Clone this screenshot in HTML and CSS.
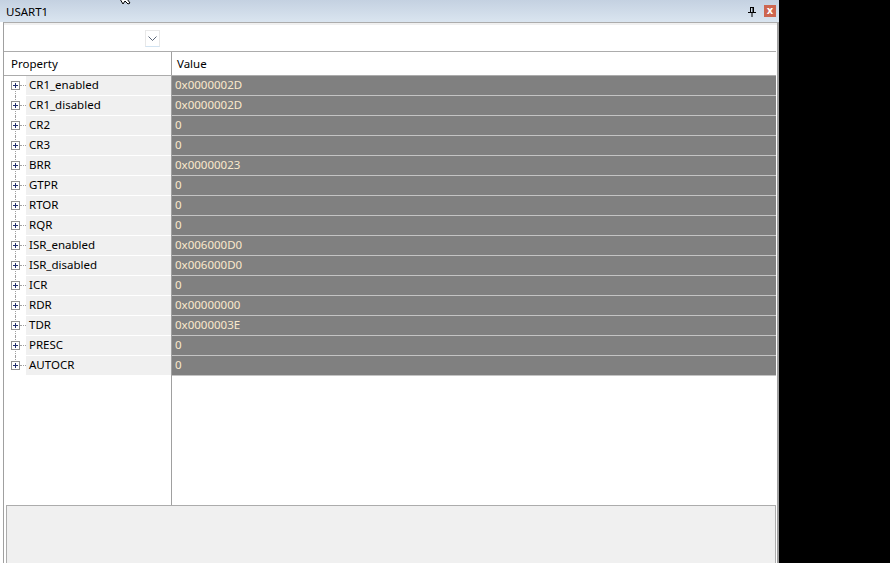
FILE: index.html
```html
<!DOCTYPE html>
<html lang="en">
<head>
    <meta charset="UTF-8">
    <title>USART1</title>
    <link rel="stylesheet" href="styles.css">
</head>
<body>
    <div class="window">
        <div class="titlebar">
            <span class="title">USART1</span>
            <svg class="cursor" width="14" height="6" viewBox="0 0 14 6">
                <path d="M1 0 L4 5 L6 2 L9 5 L11 4 L8 0" fill="#fff" stroke="#000" stroke-width="1"/>
            </svg>
            <div class="title-buttons">
                <svg class="pin" width="8" height="11" viewBox="0 0 8 11">
                    <path d="M2 1.5 H6 M2.5 1 V6.5 M5.5 1 V6.5 M0 6.5 H8 M4 7 V11" stroke="#000" stroke-width="1" fill="none"/>
                    <rect x="4.5" y="1" width="1" height="5.5" fill="#000"/>
                </svg>
                <div class="close">x</div>
            </div>
        </div>
        <div class="frame">
            <div class="strip"></div>
            <div class="toolbar">
                <div class="dropdown">
                    <svg width="9" height="6" viewBox="0 0 9 6">
                        <path d="M0.5 0.5 L4.5 4.5 L8.5 0.5" stroke="#5b6577" stroke-width="1" fill="none"/>
                    </svg>
                </div>
            </div>
            <div class="grid">
                <div class="header">
                    <div class="head-prop">Property</div>
                    <div class="head-val">Value</div>
                </div>
                <div class="rows">
                    <div class="row"><div class="prop"><span class="tree"><span class="plus"></span></span><span class="name">CR1_enabled</span></div><div class="val">0x0000002D</div></div>
                    <div class="row"><div class="prop"><span class="tree"><span class="plus"></span></span><span class="name">CR1_disabled</span></div><div class="val">0x0000002D</div></div>
                    <div class="row"><div class="prop"><span class="tree"><span class="plus"></span></span><span class="name">CR2</span></div><div class="val">0</div></div>
                    <div class="row"><div class="prop"><span class="tree"><span class="plus"></span></span><span class="name">CR3</span></div><div class="val">0</div></div>
                    <div class="row"><div class="prop"><span class="tree"><span class="plus"></span></span><span class="name">BRR</span></div><div class="val">0x00000023</div></div>
                    <div class="row"><div class="prop"><span class="tree"><span class="plus"></span></span><span class="name">GTPR</span></div><div class="val">0</div></div>
                    <div class="row"><div class="prop"><span class="tree"><span class="plus"></span></span><span class="name">RTOR</span></div><div class="val">0</div></div>
                    <div class="row"><div class="prop"><span class="tree"><span class="plus"></span></span><span class="name">RQR</span></div><div class="val">0</div></div>
                    <div class="row"><div class="prop"><span class="tree"><span class="plus"></span></span><span class="name">ISR_enabled</span></div><div class="val">0x006000D0</div></div>
                    <div class="row"><div class="prop"><span class="tree"><span class="plus"></span></span><span class="name">ISR_disabled</span></div><div class="val">0x006000D0</div></div>
                    <div class="row"><div class="prop"><span class="tree"><span class="plus"></span></span><span class="name">ICR</span></div><div class="val">0</div></div>
                    <div class="row"><div class="prop"><span class="tree"><span class="plus"></span></span><span class="name">RDR</span></div><div class="val">0x00000000</div></div>
                    <div class="row"><div class="prop"><span class="tree"><span class="plus"></span></span><span class="name">TDR</span></div><div class="val">0x0000003E</div></div>
                    <div class="row"><div class="prop"><span class="tree"><span class="plus"></span></span><span class="name">PRESC</span></div><div class="val">0</div></div>
                    <div class="row"><div class="prop"><span class="tree"><span class="plus"></span></span><span class="name">AUTOCR</span></div><div class="val">0</div></div>
                </div>
                <div class="filler">
                    <div class="filler-prop"></div>
                    <div class="filler-val"></div>
                </div>
            </div>
            <div class="description"></div>
        </div>
    </div>
</body>
</html>
```

FILE: styles.css
```css
html, body {
    margin: 0;
    height: 100%;
}
body {
    background-color: #000;
    font-family: "Noto Sans", "Liberation Sans", sans-serif;
    font-size: 11.5px;
    color: #000;
    overflow: hidden;
}
.window {
    width: 779px;
    height: 563px;
    background-color: #fff;
    display: flex;
    flex-direction: column;
}
.titlebar {
    height: 22px;
    background: linear-gradient(#c4d1e1, #dae5f0);
    display: flex;
    align-items: center;
    justify-content: space-between;
    padding: 0 3px 0 6px;
    position: relative;
}
.title {
    line-height: 22px;
    padding-top: 2px;
}
.cursor {
    position: absolute;
    left: 119px;
    top: -1px;
}
.title-buttons {
    display: flex;
    align-items: center;
    gap: 8px;
}
.pin {
    margin-top: 1px;
}
.close {
    width: 12px;
    height: 12px;
    background-color: #cd6650;
    color: #fff;
    font-family: "DejaVu Sans", sans-serif;
    font-weight: bold;
    font-size: 10px;
    line-height: 11px;
    text-align: center;
}
.frame {
    flex: 1;
    margin-left: 3px;
    border-left: 1px solid #a0a0a0;
    border-top: 1px solid #acacac;
    border-right: 2px solid #a0a0a0;
    display: flex;
    flex-direction: column;
    min-height: 0;
}
.strip {
    height: 2px;
    background-color: #f0f0f0;
}
.toolbar {
    height: 26px;
    border-bottom: 1px solid #acacac;
    margin-right: 1px;
    display: flex;
    align-items: center;
    padding-left: 141px;
}
.dropdown {
    width: 13px;
    height: 15px;
    border: 1px solid #e8e8e8;
    border-bottom-color: #d2e3f1;
    display: flex;
    align-items: center;
    justify-content: center;
    margin-top: 1px;
}
.grid {
    display: flex;
    flex-direction: column;
    flex: 0 0 453px;
    margin-right: 1px;
}
.header {
    display: flex;
    height: 23px;
    border-bottom: 1px solid #acacac;
    line-height: 24px;
}
.head-prop {
    width: 160px;
    padding-left: 7px;
    border-right: 1px solid #a0a0a0;
}
.head-val {
    padding-left: 5px;
}
.row {
    display: flex;
    height: 20px;
}
.prop {
    width: 167px;
    display: flex;
    border-right: 1px solid #a0a0a0;
}
.tree {
    width: 22px;
    position: relative;
    display: flex;
    align-items: center;
}
.tree::before {
    content: "";
    position: absolute;
    left: 11px;
    top: 0;
    bottom: 0;
    border-left: 1px dotted #a0a0a0;
}
.row:first-child .tree::before {
    top: 10px;
}
.row:last-child .tree::before {
    bottom: 10px;
}
.tree::after {
    content: "";
    position: absolute;
    left: 16px;
    right: 0;
    top: 9px;
    border-top: 1px dotted #a0a0a0;
}
.plus {
    width: 7px;
    height: 7px;
    margin-left: 7px;
    margin-top: -1px;
    border: 1px solid #919191;
    background-color: #fff;
    position: relative;
    z-index: 1;
}
.plus::before {
    content: "";
    position: absolute;
    left: 1px;
    top: 3px;
    width: 5px;
    height: 1px;
    background-color: #1f2d6b;
}
.plus::after {
    content: "";
    position: absolute;
    left: 3px;
    top: 1px;
    width: 1px;
    height: 5px;
    background-color: #1f2d6b;
}
.name {
    flex: 1;
    background-color: #f0f0f0;
    border-bottom: 1px solid #fff;
    padding-left: 3px;
    line-height: 18px;
}
.val {
    flex: 1;
    background-color: #808080;
    border-bottom: 1px solid #c4c4c4;
    color: #fbe9cc;
    padding-left: 3px;
    line-height: 18px;
}
.filler {
    flex: 1;
    display: flex;
}
.filler-prop {
    width: 167px;
    border-right: 1px solid #a0a0a0;
}
.description {
    flex: 1;
    margin: 0 1px 0 2px;
    background-color: #f0f0f0;
    border: 1px solid #acacac;
    border-bottom: none;
}
```
